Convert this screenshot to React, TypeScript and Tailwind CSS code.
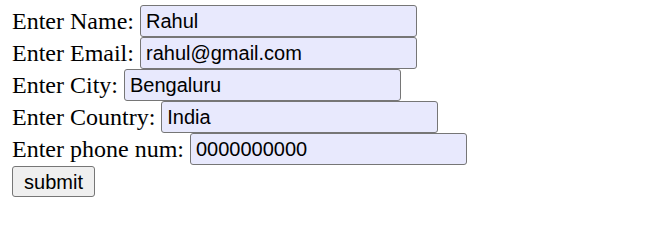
import React from "react";

const rows: { label: string; value: string }[] = [
  { label: "Enter Name:", value: "Rahul" },
  { label: "Enter Email:", value: "rahul@gmail.com" },
  { label: "Enter City:", value: "Bengaluru" },
  { label: "Enter Country:", value: "India" },
  { label: "Enter phone num:", value: "0000000000" },
];

export default function App() {
  return (
    <div className="bg-white w-[647px] h-[235px] pl-[12px] pt-[5px] text-black">
      {rows.map((r) => (
        <div key={r.label} className="flex items-center h-[32px]">
          <span className="text-[24px] leading-[28px] font-['Liberation_Serif',serif] text-black whitespace-pre">
            {r.label}
          </span>
          <input
            readOnly
            value={r.value}
            className="ml-[6px] w-[277px] h-[32px] rounded-[3px] border border-[#767676] bg-[#e8e9fd] pl-[5px] text-[20px] font-['Liberation_Sans',sans-serif] text-black outline-none"
          />
        </div>
      ))}
      <button className="mt-[1px] h-[31px] w-[83px] rounded-[3px] border border-[#767676] bg-[#efefef] text-[20px] leading-[24px] font-['Liberation_Sans',sans-serif] text-black">
        submit
      </button>
    </div>
  );
}
